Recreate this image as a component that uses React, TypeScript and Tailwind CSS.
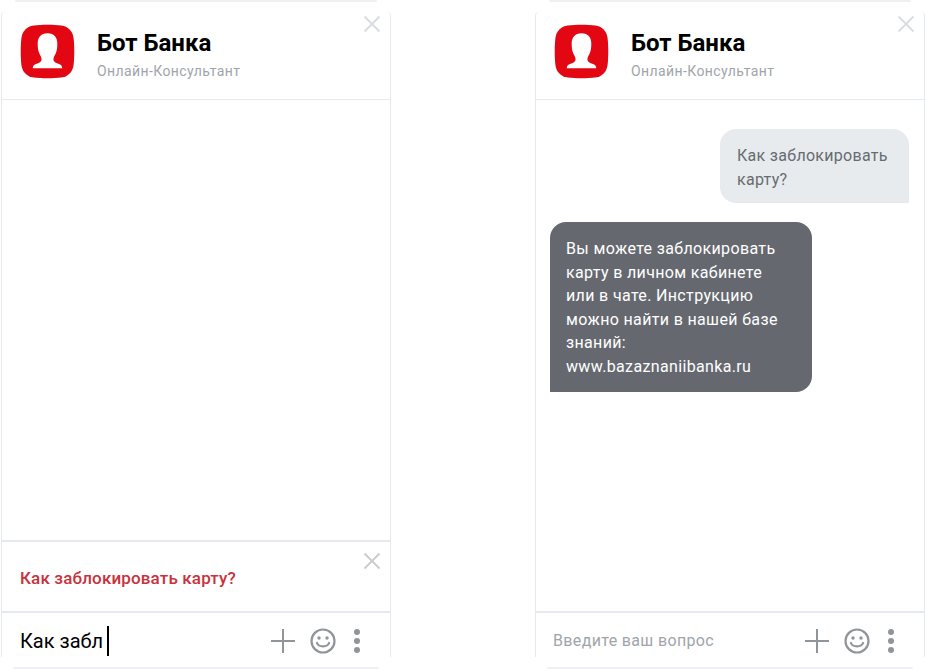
const BORDER = "border-[#e6e9ee]";

function BankLogo() {
  return (
    <svg width="55" height="55" viewBox="0 0 56 56" className="shrink-0">
      <path
        d="M14 1.500C22 .5 34 .5 42 1.500C49 2.500 53.500 7 54.500 14C55.500 22 55.500 34 54.500 42C53.500 49 49 53.500 42 54.500C34 55.500 22 55.500 14 54.500C7 53.500 2.500 49 1.500 42C.5 34 .5 22 1.500 14C2.500 7 7 2.500 14 1.500Z"
        fill="#e30613"
      />
      <path
        d="M28 9.500C21 9.500 18 14 18 20C18 24 18.500 27 19.500 29.500C20.500 32 22 34 22 36C22 38.500 20 39.500 17 40.500C14 41.500 13 43 13 45L43 45C43 43 42 41.500 39 40.500C36 39.500 34 38.500 34 36C34 34 35.500 32 36.500 29.500C37.500 27 38 24 38 20C38 14 35 9.500 28 9.500Z"
        fill="#fff"
      />
    </svg>
  );
}

function CloseIcon({ color }: { color: string }) {
  return (
    <svg width="18" height="18" viewBox="0 0 18 18" fill="none" stroke={color} strokeWidth="1.800">
      <path d="M1.500 1.500L16.500 16.500M16.500 1.500L1.500 16.500" />
    </svg>
  );
}

function InputIcons() {
  return (
    <div className="flex items-center">
      <svg width="24" height="24" viewBox="0 0 24 24" fill="none" stroke="#8f959b" strokeWidth="2">
        <path d="M0 12H24M12 0V24" />
      </svg>
      <svg width="26" height="26" viewBox="0 0 26 26" fill="none" stroke="#8f959b" strokeWidth="2.200" className="ml-[15px]">
        <circle cx="13" cy="13" r="11.500" />
        <path d="M7 15C8.500 19.500 17.500 19.500 19 15" strokeLinecap="round" />
        <circle cx="9" cy="10" r="1.700" fill="#8f959b" stroke="none" />
        <circle cx="17" cy="10" r="1.700" fill="#8f959b" stroke="none" />
      </svg>
      <div className="ml-[18px] flex flex-col gap-[3px]">
        <span className="size-[6px] rounded-full bg-[#8f959b]" />
        <span className="size-[6px] rounded-full bg-[#8f959b]" />
        <span className="size-[6px] rounded-full bg-[#8f959b]" />
      </div>
    </div>
  );
}

function Header() {
  return (
    <div className={`relative flex h-[88px] shrink-0 items-start border-b ${BORDER} pl-[18px] pt-[12px]`}>
      <BankLogo />
      <div className="ml-[22px] pt-[3px]">
        <div className="text-[24px] leading-[32px] font-bold text-black">Бот Банка</div>
        <div className="mt-[2px] text-[14px] leading-[20px] tracking-[0.4px] text-[#a0a5aa]">Онлайн-Консультант</div>
      </div>
      <div className="absolute right-[9px] top-[3px]">
        <CloseIcon color="#d8dde2" />
      </div>
    </div>
  );
}

function Phone({ children }: { children: React.ReactNode }) {
  return (
    <div className="flex w-[390px] flex-col">
      <div className="mx-[14px] h-[2px] rounded-b bg-[#eef0f3]" />
      <div className={`mt-[10px] flex h-[645px] flex-col rounded-t-[4px] border-x ${BORDER} bg-white`}>
        {children}
      </div>
      <div className="mx-[12px] mt-[10px] h-[2px] rounded-t bg-[#eef0f3]" />
    </div>
  );
}

export default function App() {
  return (
    <div className="flex h-[670px] w-[926px] gap-[144px] bg-white pl-[1px] font-['Roboto',sans-serif]">
      <Phone>
        <Header />
        <div className="flex-1" />
        <div className={`relative flex h-[71px] shrink-0 items-center border-t-2 ${BORDER} pl-[18px] pt-[4px]`}>
          <span className="text-[17px] font-medium tracking-[0.15px] text-[#c8323c]">Как заблокировать карту?</span>
          <div className="absolute right-[9px] top-[10px]">
            <CloseIcon color="#c9cbcd" />
          </div>
        </div>
        <div className={`flex h-[46px] shrink-0 items-center justify-between border-t-2 ${BORDER} pl-[18px] pr-[30px] pt-[12px]`}>
          <div className="flex items-center">
            <span className="text-[20px] leading-[28px] text-black">Как забл</span>
            <span className="ml-[4px] h-[30px] w-[2px] bg-black" />
          </div>
          <InputIcons />
        </div>
      </Phone>
      <Phone>
        <Header />
        <div className="flex flex-1 flex-col pl-[14px] pr-[15px] pt-[29px]">
          <div className="w-[189px] self-end rounded-l-[16px] rounded-tr-[16px] bg-[#e8ebee] pb-[12px] pl-[17px] pr-[16px] pt-[15px] text-[16px] leading-[23.500px] tracking-[0.3px] text-[#666b70]">
            Как заблокировать карту?
          </div>
          <div className="mt-[19px] w-[262px] rounded-t-[16px] rounded-br-[16px] bg-[#65696f] pb-[14px] pl-[16px] pr-[30px] pt-[15px] text-[16px] leading-[23.500px] tracking-[0.35px] text-white">
            Вы можете заблокировать карту в личном кабинете или в чате. Инструкцию можно найти в нашей базе знаний: www.bazaznaniibanka.ru
          </div>
        </div>
        <div className={`flex h-[46px] shrink-0 items-center justify-between border-t-2 ${BORDER} pl-[17px] pr-[30px] pt-[12px]`}>
          <span className="text-[16px] tracking-[0.35px] text-[#a0a5aa]">Введите ваш вопрос</span>
          <InputIcons />
        </div>
      </Phone>
    </div>
  );
}
